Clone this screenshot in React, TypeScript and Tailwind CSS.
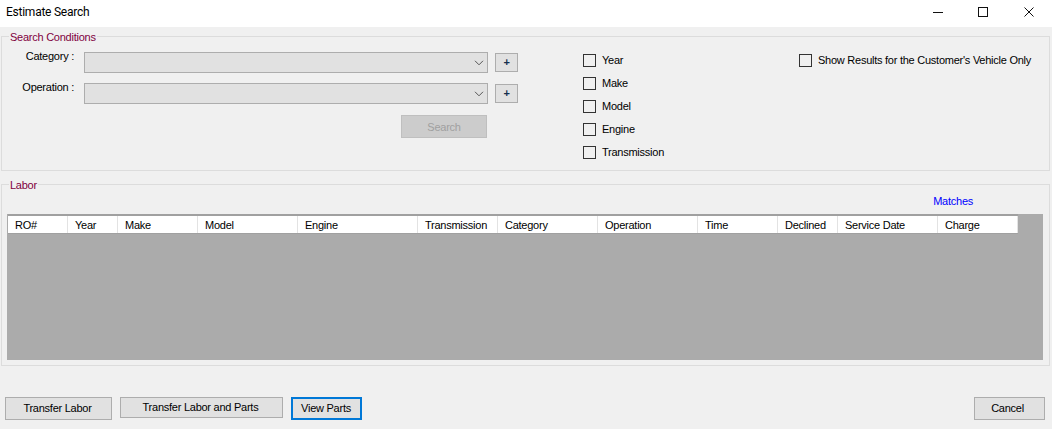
import React from 'react';

const columns = [
  { name: 'RO#', width: 'w-[60px]' },
  { name: 'Year', width: 'w-[50px]' },
  { name: 'Make', width: 'w-[80px]' },
  { name: 'Model', width: 'w-[100px]' },
  { name: 'Engine', width: 'w-[120px]' },
  { name: 'Transmission', width: 'w-[80px]' },
  { name: 'Category', width: 'w-[100px]' },
  { name: 'Operation', width: 'w-[100px]' },
  { name: 'Time', width: 'w-[80px]' },
  { name: 'Declined', width: 'w-[60px]' },
  { name: 'Service Date', width: 'w-[100px]' },
  { name: 'Charge', width: 'w-[80px]' },
];

const filters = ['Year', 'Make', 'Model', 'Engine', 'Transmission'];

const Check: React.FC<{ label: string }> = ({ label }) => (
  <label className="flex items-center h-[13px] gap-[6px] whitespace-nowrap">
    <span className="w-[13px] h-[13px] shrink-0 bg-[#f0f0f0] border border-[#333333]" />
    <span className="-mt-[1px]">{label}</span>
  </label>
);

const Combo: React.FC = () => (
  <div className="w-[404px] h-[21px] bg-[#e1e1e1] border border-[#adadad] flex items-center justify-end pr-[3px]">
    <svg width="10" height="6" viewBox="0 0 10 6" fill="none" stroke="#555555" strokeWidth="1">
      <path d="M1 0.8 L5 4.8 L9 0.8" />
    </svg>
  </div>
);

const PlusButton: React.FC = () => (
  <button className="w-[23px] h-[19px] bg-[#e1e1e1] border border-[#adadad] flex items-center justify-center text-[11px] font-bold text-[#14304f]">
    +
  </button>
);

const Legend: React.FC<{ text: string }> = ({ text }) => (
  <span className="absolute left-[7px] -top-[7px] px-[1px] bg-[#f0f0f0] leading-[14px] text-[#800040]">{text}</span>
);

const App: React.FC = () => {
  return (
    <div className="w-[1052px] h-[429px] bg-[#f0f0f0] flex flex-col overflow-hidden text-[11px] tracking-[-0.25px] text-black font-['Liberation_Sans',Arial,sans-serif]">
      <div className="h-[27px] bg-white flex items-center justify-between shrink-0">
        <span className="pl-[6px] pb-[3px] text-[12px] tracking-[-0.25px] font-['Roboto',sans-serif]">Estimate Search</span>
        <div className="flex items-center pr-[18px] pb-[4px]">
          <svg width="10" height="10" viewBox="0 0 10 10" className="mr-[35px]" stroke="#111111" fill="none">
            <path d="M0 5.5 H10" />
          </svg>
          <svg width="10" height="10" viewBox="0 0 10 10" className="mr-[36px]" stroke="#111111" fill="none">
            <rect x="0.5" y="0.5" width="9" height="9" />
          </svg>
          <svg width="10" height="10" viewBox="0 0 10 10" stroke="#111111" fill="none">
            <path d="M0.5 0.5 L9.5 9.5 M9.5 0.5 L0.5 9.5" />
          </svg>
        </div>
      </div>

      <section className="relative mt-[9px] ml-[1px] w-[1049px] h-[135px] shrink-0 border border-[#dcdcdc] flex">
        <Legend text="Search Conditions" />
        <div className="w-[518px] pt-[15px] pl-[8px] shrink-0">
          <div className="flex">
            <span className="w-[64px] text-right leading-[14px] -mt-[3px]">Category :</span>
            <div className="ml-[10px]"><Combo /></div>
            <div className="ml-[7px] mt-[1px]"><PlusButton /></div>
          </div>
          <div className="flex mt-[10px]">
            <span className="w-[64px] text-right leading-[14px] -mt-[3px]">Operation :</span>
            <div className="ml-[10px]"><Combo /></div>
            <div className="ml-[7px] mt-[1px]"><PlusButton /></div>
          </div>
          <button className="block ml-[391px] mt-[11px] w-[86px] h-[23px] pt-[1px] bg-[#cccccc] border border-[#bfbfbf] text-[#a0a0a0]">
            Search
          </button>
        </div>
        <div className="ml-[63px] pt-[17px] w-[216px] shrink-0 flex flex-col gap-[10px]">
          {filters.map((f) => (
            <Check key={f} label={f} />
          ))}
        </div>
        <div className="pt-[17px]">
          <Check label="Show Results for the Customer's Vehicle Only" />
        </div>
      </section>

      <section className="relative mt-[13px] ml-[1px] w-[1049px] h-[182px] shrink-0 border border-[#dcdcdc] px-[5px]">
        <Legend text="Labor" />
        <div className="h-[29px] flex justify-end pr-[71px] pt-[9px] leading-[14px] text-[#0000ff]">Matches</div>
        <div className="w-[1036px] h-[146px] bg-[#ababab]">
          <div className="w-[1010px] ml-[1px] h-[20px] flex bg-white border-t-2 border-[#a0a0a0] border-b border-b-[#a0a0a0]">
            {columns.map((c) => (
              <div key={c.name} className={`${c.width} shrink-0 h-full flex items-center pl-[7px] pt-[1px] border-r border-[#e3e3e3] whitespace-nowrap overflow-hidden`}>
                {c.name}
              </div>
            ))}
          </div>
        </div>
      </section>

      <div className="mt-[31px] px-[5px] flex items-start">
        <button className="w-[107px] h-[23px] bg-[#e1e1e1] border border-[#adadad] pb-[1px] pr-[2px]">Transfer Labor</button>
        <button className="ml-[8px] w-[163px] h-[21px] bg-[#e1e1e1] border border-[#adadad] pr-[2px]">Transfer Labor and Parts</button>
        <button className="ml-[8px] w-[71px] h-[23px] bg-[#e1e1e1] border-2 border-[#0078d7] pb-[1px] pr-[1px]">View Parts</button>
        <button className="ml-auto mr-[2px] w-[71px] h-[23px] bg-[#e1e1e1] border border-[#adadad] pb-[1px] pr-[4px]">Cancel</button>
      </div>
    </div>
  );
};

export default App;
